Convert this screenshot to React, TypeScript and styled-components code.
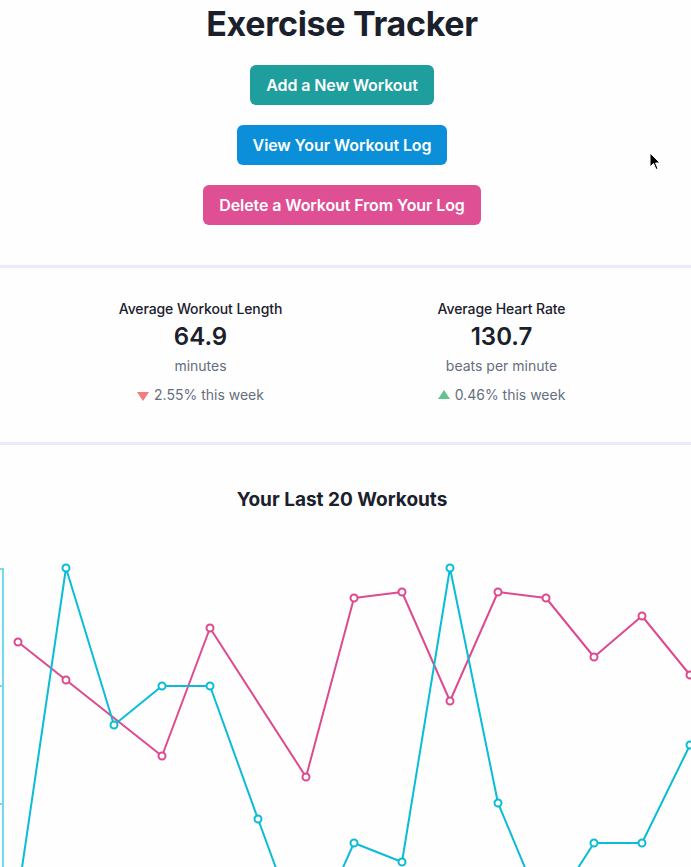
import React from 'react';
import styled, {createGlobalStyle} from 'styled-components';

const GlobalStyle = createGlobalStyle`
  html, body {
    margin: 0;
    padding: 0;
    background: #fefefe;
    overflow: hidden;
    font-family: Inter, "Noto Sans", "Liberation Sans", sans-serif;
    color: #1a202c;
  }
`;

const Page = styled.div`
  position: relative;
  width: 691px;
  height: 867px;
  overflow: hidden;
`;

// content column is centred as if a 7px scrollbar took space on the right
const Header = styled.header`
  display: flex;
  flex-direction: column;
  align-items: center;
  padding: 0 7px 40px 0;
`;

const Title = styled.h1`
  margin: 0 0 17px;
  font-size: 34px;
  line-height: 48px;
  font-weight: 700;
  color: #1a202c;
  letter-spacing: -0.3px;
`;

const ButtonStack = styled.div`
  display: flex;
  flex-direction: column;
  align-items: center;
  gap: 20px;
`;

const ActionButton = styled.button<{$bg: string}>`
  height: 40px;
  padding: 0 16px;
  border: none;
  border-radius: 6px;
  background: ${p => p.$bg};
  color: #fff;
  font-family: inherit;
  font-size: 16px;
  font-weight: 600;
  letter-spacing: -0.1px;
  cursor: pointer;
`;

const Divider = styled.hr`
  margin: 0;
  border: none;
  height: 3px;
  background: #eee8fa;
`;

const StatsRow = styled.section`
  display: grid;
  grid-template-columns: 301px 301px;
  padding: 31px 0 37px 50px;
`;

const Stat = styled.div`
  display: flex;
  flex-direction: column;
  align-items: center;
`;

const StatLabel = styled.div`
  font-size: 14px;
  line-height: 20px;
  font-weight: 500;
  color: #1a202c;
  letter-spacing: -0.1px;
`;

const StatNumber = styled.div`
  font-size: 24px;
  line-height: 36px;
  font-weight: 600;
  color: #1a202c;
`;

const StatHelp = styled.div<{$gap?: number}>`
  font-size: 14px;
  line-height: 20px;
  color: #4a5568;
  opacity: 0.85;
  margin-top: ${p => p.$gap ?? 1}px;
  display: flex;
  align-items: center;
  gap: 5px;
`;

const Arrow = styled.span<{$up?: boolean}>`
  width: 0;
  height: 0;
  border-left: 6px solid transparent;
  border-right: 6px solid transparent;
  ${p => (p.$up ? 'border-bottom: 9px solid #48bb78;' : 'border-top: 9px solid #f56565;')}
  margin-top: ${p => (p.$up ? '-1px' : '2px')};
`;

const ChartSection = styled.section`
  display: flex;
  flex-direction: column;
  align-items: center;
  padding-top: 40px;
`;

const ChartTitle = styled.h2`
  margin: 0;
  padding-right: 7px;
  font-size: 19px;
  line-height: 29px;
  font-weight: 700;
  color: #1a202c;
`;

const ChartSvg = styled.svg`
  display: block;
  margin-top: 27px;
  width: 691px;
  height: 420px;
  overflow: visible;
`;

const Cursor = styled.svg`
  position: absolute;
  left: 649px;
  top: 152px;
  width: 12px;
  height: 19px;
`;

const TOP = 540;

const pink: [number, number][] = [
  [18, 641], [66, 679], [162, 755], [210, 627], [306, 776], [354, 597], [402, 591],
  [450, 700], [498, 591], [546, 597], [594, 656], [642, 615], [690, 674], [738, 700],
];

const cyan: [number, number][] = [
  [18, 894], [66, 567], [114, 724], [162, 685], [210, 685], [258, 818], [306, 949],
  [354, 842], [402, 861], [450, 567], [498, 802], [546, 917], [594, 842], [642, 842],
  [690, 744], [738, 700],
];

const toPath = (pts: [number, number][]) =>
  pts.map(([x, y], i) => `${i ? 'L' : 'M'}${x} ${y - TOP}`).join(' ');

const Series: React.FC<{pts: [number, number][]; color: string}> = ({pts, color}) => (
  <g>
    <path d={toPath(pts)} fill="none" stroke={color} strokeWidth={2} strokeLinejoin="round" />
    {pts.map(([x, y]) => (
      <circle key={x} cx={x} cy={y - TOP} r={3.5} fill="#fff" stroke={color} strokeWidth={2} />
    ))}
  </g>
);

const App: React.FC = () => (
  <Page>
    <GlobalStyle />
    <Header>
      <Title>Exercise Tracker</Title>
      <ButtonStack>
        <ActionButton $bg="#1e9e9c">Add a New Workout</ActionButton>
        <ActionButton $bg="#0a8fd8">View Your Workout Log</ActionButton>
        <ActionButton $bg="#de4f93">Delete a Workout From Your Log</ActionButton>
      </ButtonStack>
    </Header>
    <Divider />
    <StatsRow>
      <Stat>
        <StatLabel>Average Workout Length</StatLabel>
        <StatNumber>64.9</StatNumber>
        <StatHelp>minutes</StatHelp>
        <StatHelp $gap={9}>
          <Arrow />
          2.55% this week
        </StatHelp>
      </Stat>
      <Stat>
        <StatLabel>Average Heart Rate</StatLabel>
        <StatNumber>130.7</StatNumber>
        <StatHelp>beats per minute</StatHelp>
        <StatHelp $gap={9}>
          <Arrow $up />
          0.46% this week
        </StatHelp>
      </Stat>
    </StatsRow>
    <Divider />
    <ChartSection>
      <ChartTitle>Your Last 20 Workouts</ChartTitle>
      <ChartSvg viewBox="0 0 691 420">
        <g stroke="#74d9e9" strokeWidth={2}>
          <line x1={3} y1={567 - TOP} x2={3} y2={420} />
          <line x1={0} y1={568 - TOP} x2={4} y2={568 - TOP} />
          <line x1={0} y1={685 - TOP} x2={4} y2={685 - TOP} />
          <line x1={0} y1={803 - TOP} x2={4} y2={803 - TOP} />
        </g>
        <Series pts={pink} color="#dd4a8f" />
        <Series pts={cyan} color="#0bbcd6" />
      </ChartSvg>
    </ChartSection>
    <Cursor viewBox="0 0 12 19">
      <path d="M1 1 L1 15 L4.5 11.5 L7 17.5 L9 16.6 L6.6 11 L11 11 Z" fill="#000" stroke="#fff" strokeWidth={1} strokeLinejoin="round" />
    </Cursor>
  </Page>
);

export default App;
